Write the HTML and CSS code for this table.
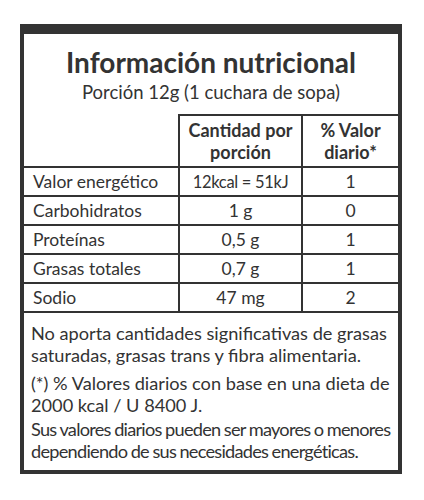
FILE: index.html
```html
<!DOCTYPE html>
<html lang="es">
<head>
<meta charset="utf-8">
<link rel="stylesheet" href="styles.css">
</head>
<body>
<div class="label">
  <div class="head">
    <h1 class="title">Información nutricional</h1>
    <p class="serving">Porción 12g (1 cuchara de sopa)</p>
  </div>
  <table class="facts">
    <colgroup>
      <col class="c1"><col class="c2"><col class="c3">
    </colgroup>
    <thead>
      <tr>
        <th class="blank"></th>
        <th>Cantidad por<br>porción</th>
        <th>% Valor<br>diario*</th>
      </tr>
    </thead>
    <tbody>
      <tr><td>Valor energético</td><td class="tight">12kcal = 51kJ</td><td>1</td></tr>
      <tr><td>Carbohidratos</td><td>1 g</td><td>0</td></tr>
      <tr><td>Proteínas</td><td>0,5 g</td><td>1</td></tr>
      <tr><td>Grasas totales</td><td>0,7 g</td><td>1</td></tr>
      <tr><td>Sodio</td><td>47 mg</td><td>2</td></tr>
    </tbody>
  </table>
  <div class="notes">
    <p class="n1">No aporta cantidades significativas de grasas saturadas, grasas trans y fibra alimentaria.</p>
    <p class="n2">(*) % Valores diarios con base en una dieta de 2000 kcal / U 8400 J.</p>
    <p class="n3">Sus valores diarios pueden ser mayores o menores dependiendo de sus necesidades energéticas.</p>
  </div>
</div>
</body>
</html>
```
FILE: styles.css
```css
html, body {
  margin: 0;
  padding: 0;
  background: #ffffff;
}
body {
  font-family: Lato, "Open Sans", sans-serif;
  color: #333333;
  padding-top: 24px;
}
.label {
  box-sizing: border-box;
  width: 382px;
  margin-left: 20px;
  border: 4px solid #333333;
  border-top-width: 10px;
}
.head {
  text-align: center;
  padding-top: 12px;
  height: 80px;
  box-sizing: border-box;
}
.title {
  margin: 0;
  font-size: 28px;
  line-height: 32px;
  font-weight: 700;
}
.serving {
  margin: 2px 0 0;
  font-size: 18.5px;
  line-height: 24px;
}
.facts {
  width: 100%;
  border-collapse: collapse;
  table-layout: fixed;
}
.c1 { width: 155px; }
.c2 { width: 123px; }
.c3 { width: auto; }
.facts th,
.facts td {
  border: 2px solid #333333;
  padding: 0;
}
.facts th {
  height: 50px;
  font-size: 18px;
  line-height: 22px;
  font-weight: 700;
  text-align: center;
  vertical-align: middle;
}
.facts th.blank {
  border-top: none;
  border-left: none;
}
.facts td {
  height: 27px;
  font-size: 17.5px;
  line-height: 22px;
  text-align: center;
}
.facts td.tight {
  font-size: 16.5px;
  letter-spacing: -0.3px;
}
.facts td:first-child {
  border-left: none;
  text-align: left;
  padding-left: 9px;
}
.facts th:last-child,
.facts td:last-child {
  border-right: none;
}
.notes {
  padding: 10px 2px 8px 7px;
  font-size: 18.2px;
  line-height: 21.5px;
}
.notes p {
  margin: 0;
}
.notes .n2 {
  margin-top: 7px;
}
.notes .n3 {
  margin-top: 3px;
  letter-spacing: -0.75px;
  word-spacing: -0.5px;
}
```
